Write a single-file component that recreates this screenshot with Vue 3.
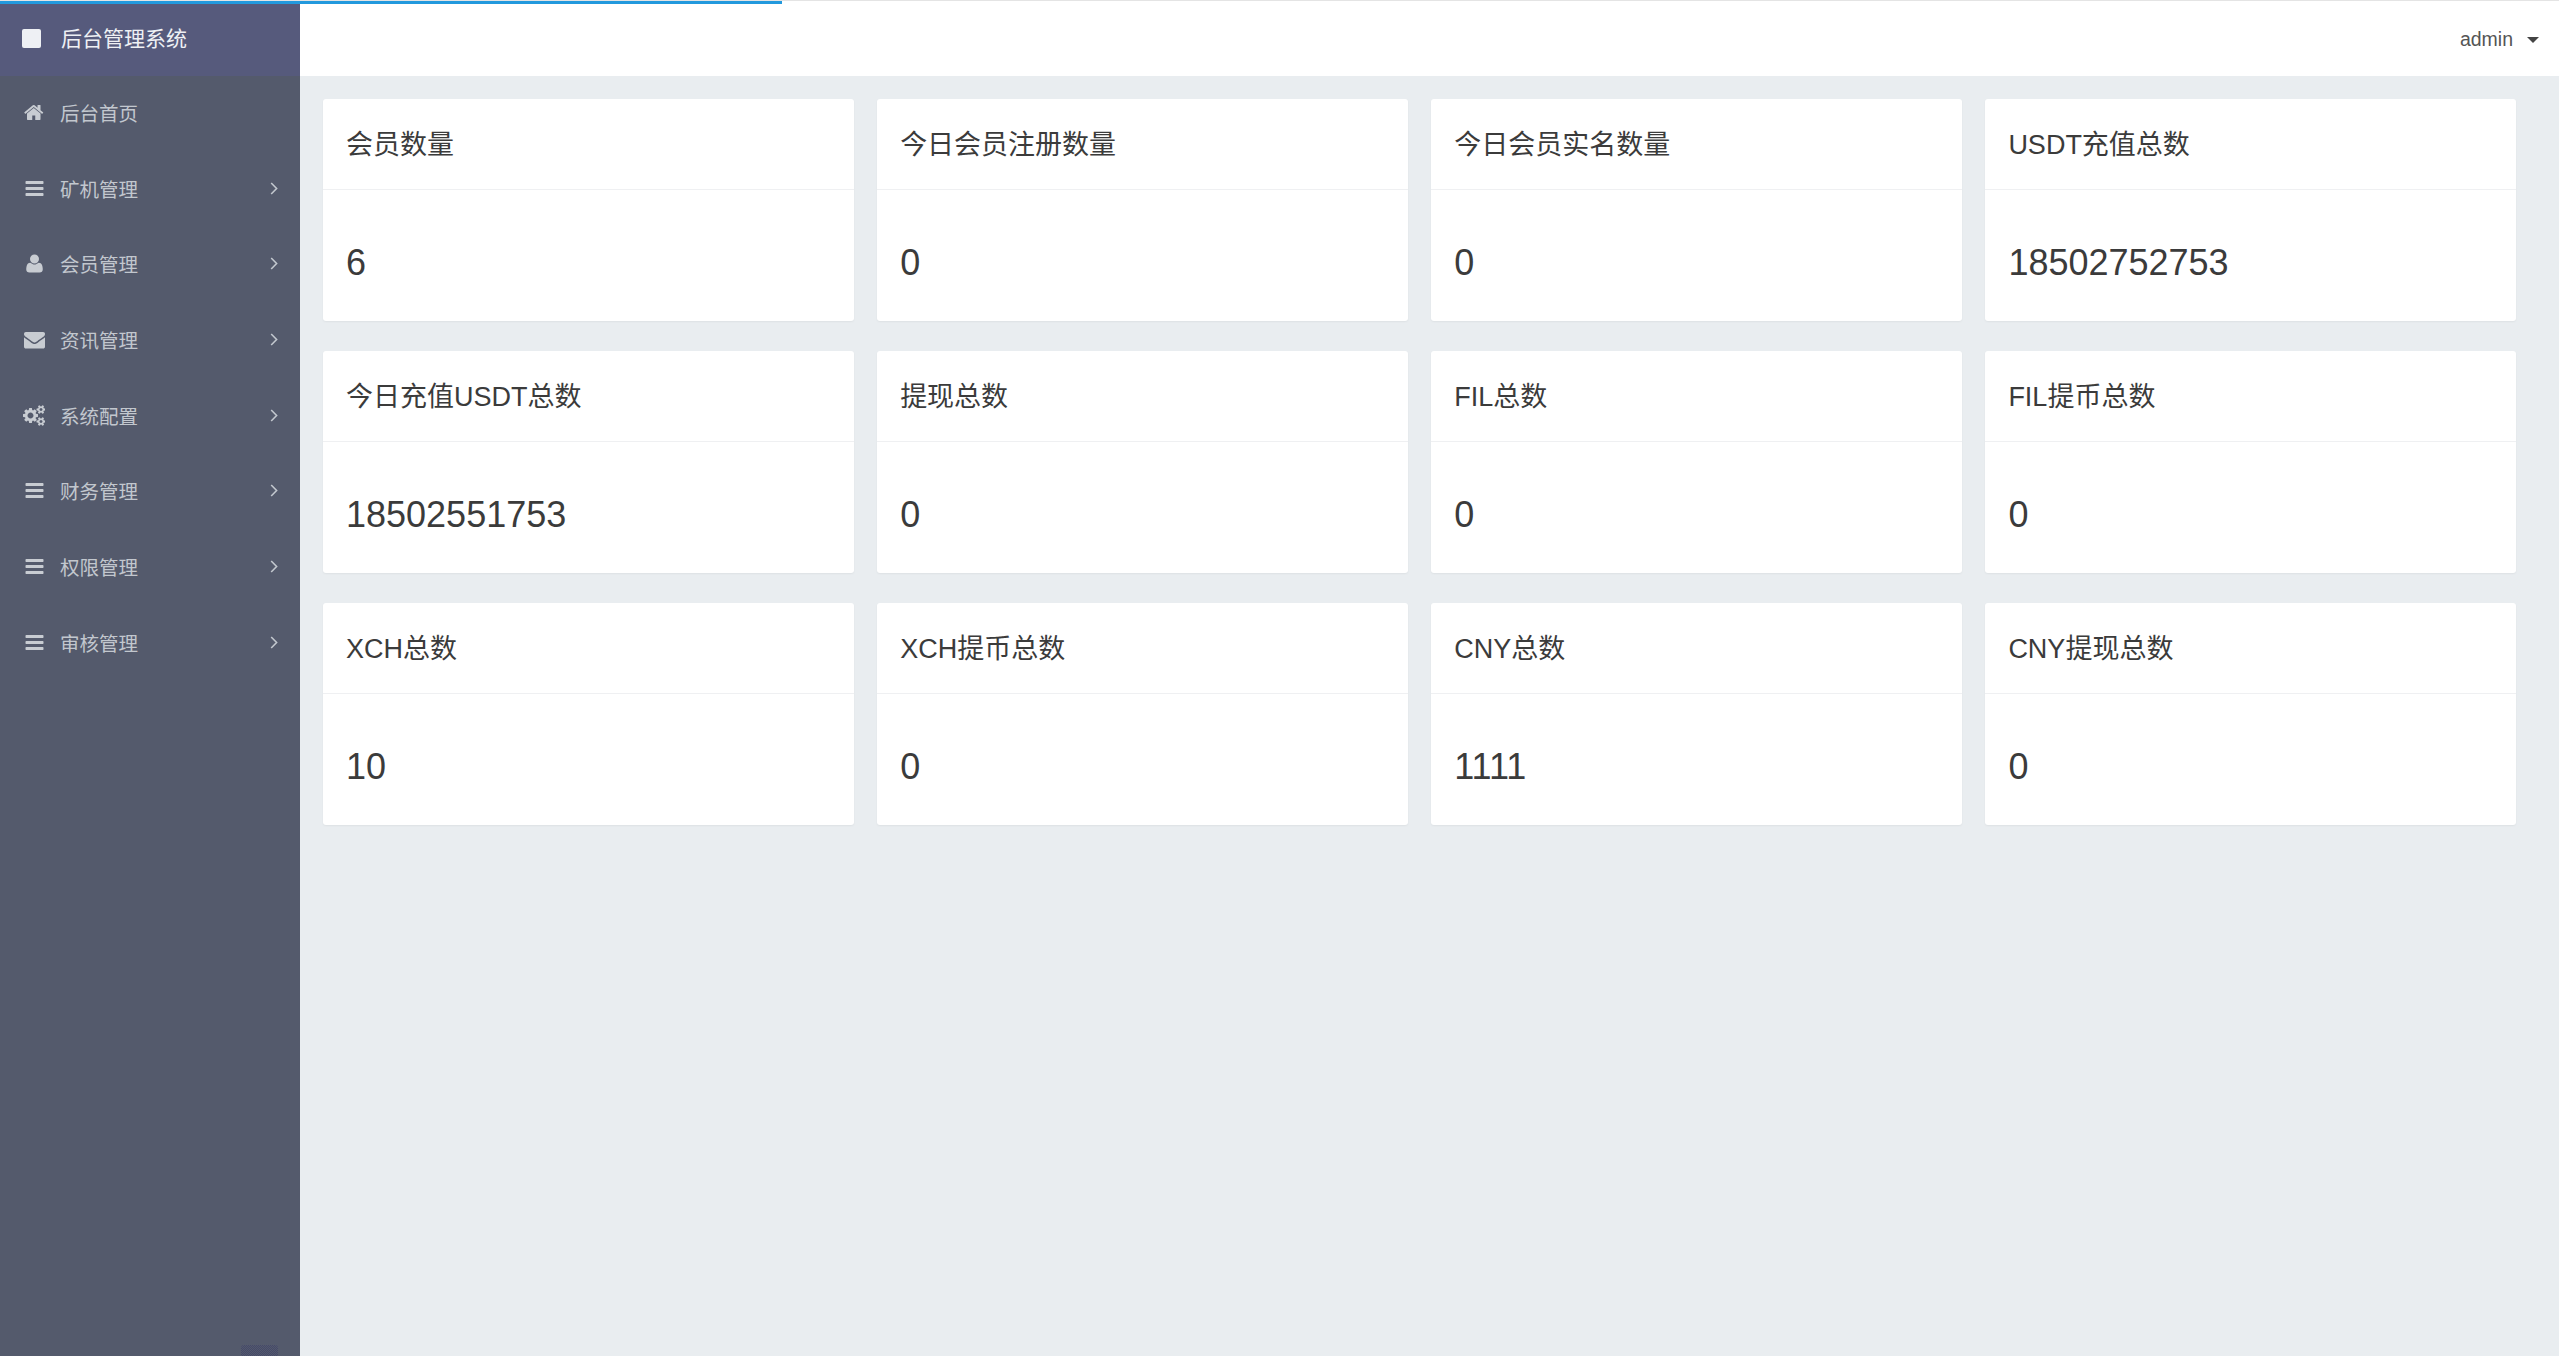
<script setup>
const ICONS = {
  bars: { w: 1792, d: 'M1664 1344v128q0 26-19 45t-45 19H192q-26 0-45-19t-19-45v-128q0-26 19-45t45-19h1408q26 0 45 19t19 45zm0-512v128q0 26-19 45t-45 19H192q-26 0-45-19t-19-45V832q0-26 19-45t45-19h1408q26 0 45 19t19 45zm0-512v128q0 26-19 45t-45 19H192q-26 0-45-19t-19-45V320q0-26 19-45t45-19h1408q26 0 45 19t19 45z' },
  home: { w: 1664, d: 'M1408 992v480q0 26-19 45t-45 19H960v-384H704v384H320q-26 0-45-19t-19-45V992q0-1 .5-3t.5-3l575-474 575 474q1 2 1 6zm223-69l-62 74q-8 9-21 11h-3q-13 0-21-7L832 424 140 1001q-12 8-24 7-13-2-21-11l-62-74q-8-10-7-23.5T37 878l719-599q32-26 76-26t76 26l244 204V288q0-14 9-23t23-9h192q14 0 23 9t9 23v408l219 182q10 8 11 21.5t-7 23.5z' },
  user: { w: 1792, d: 'M1600 1405q0 120-73 189.5t-194 69.5H459q-121 0-194-69.5T192 1405q0-53 3.5-103.5t14-109T236 1084t43-97.5 62-81 85.5-53.5T538 832q9 0 42 21.5t74.5 48 108 48T896 971t133.5-21.5 108-48 74.5-48 42-21.5q61 0 111.5 20t85.5 53.5 62 81 43 97.5 26.5 108.5 14 109 3.5 103.5zm-320-893q0 159-112.5 271.5T896 896 624.5 783.5 512 512t112.5-271.5T896 128t271.5 112.5T1280 512z' },
  envelope: { w: 1792, d: 'M1792 710v794q0 66-47 113t-113 47H160q-66 0-113-47T0 1504V710q44 49 101 87 362 246 497 345 57 42 92.5 65.5t94.5 48 110 24.5h2q51 0 110-24.5t94.5-48 92.5-65.5q170-123 498-345 57-39 100-87zm0-294q0 79-49 151t-122 123q-376 261-468 325-10 7-42.5 30.5t-54 38-52 32.5-57.5 27-50 9h-2q-23 0-50-9t-57.5-27-52-32.5-54-38T639 1015q-91-64-262-182.5T172 690q-62-42-117-115.5T0 438q0-78 41.5-130T160 256h1472q65 0 112.5 47t47.5 113z' },
  cogs: { w: 1920, d: 'M896 896q0-106-75-181t-181-75-181 75-75 181 75 181 181 75 181-75 75-181zm768 512q0-52-38-90t-90-38-90 38-38 90q0 53 37.5 90.5t90.5 37.5 90.5-37.5 37.5-90.5zm0-1024q0-52-38-90t-90-38-90 38-38 90q0 53 37.5 90.5T1536 512t90.5-37.5T1664 384zm-384 421v185q0 10-7 19.5t-16 10.5l-155 24q-11 35-32 76 34 48 90 115 7 11 7 20 0 12-7 19-23 30-82.5 89.5T999 1423q-11 0-21-7l-115-90q-37 19-77 31-11 108-23 155-7 24-30 24H547q-11 0-20-7.5t-10-17.5l-23-153q-34-10-75-31l-118 89q-7 7-20 7-11 0-21-8-144-133-144-160 0-9 7-19 10-14 41-53t47-61q-23-44-35-82l-152-24q-10-1-17-9.5T0 987V802q0-10 7-19.5T23 772l155-24q11-35 32-76-34-48-90-115-7-11-7-20 0-12 7-20 22-30 82-89t79-59q11 0 21 7l115 90q34-18 77-32 11-108 23-154 7-24 30-24h186q11 0 20 7.5t10 17.5l23 153q34 10 75 31l118-89q8-7 20-7 11 0 21 8 144 133 144 160 0 8-7 19-12 16-42 54t-45 60q23 48 34 82l152 23q10 2 17 10.5t7 19.5zm640 533v140q0 16-149 31-12 27-30 52 51 113 51 138 0 4-4 7-122 71-124 71-8 0-46-47t-52-68q-20 2-30 2t-30-2q-14 21-52 68t-46 47q-2 0-124-71-4-3-4-7 0-25 51-138-18-25-30-52-149-15-149-31v-140q0-16 149-31 13-29 30-52-51-113-51-138 0-4 4-7 4-2 35-20t59-34 30-16q8 0 46 46.5t52 67.5q20-2 30-2t30 2q51-71 92-112l6-2q4 0 124 70 4 3 4 7 0 25-51 138 17 23 30 52 149 15 149 31zm0-1024v140q0 16-149 31-12 27-30 52 51 113 51 138 0 4-4 7-122 71-124 71-8 0-46-47t-52-68q-20 2-30 2t-30-2q-14 21-52 68t-46 47q-2 0-124-71-4-3-4-7 0-25 51-138-18-25-30-52-149-15-149-31V314q0-16 149-31 13-29 30-52-51-113-51-138 0-4 4-7 4-2 35-20t59-34 30-16q8 0 46 46.5t52 67.5q20-2 30-2t30 2q51-71 92-112l6-2q4 0 124 70 4 3 4 7 0 25-51 138 17 23 30 52 149 15 149 31z' },
}

const menu = [
  { label: '后台首页', icon: 'home', arrow: false },
  { label: '矿机管理', icon: 'bars', arrow: true },
  { label: '会员管理', icon: 'user', arrow: true },
  { label: '资讯管理', icon: 'envelope', arrow: true },
  { label: '系统配置', icon: 'cogs', arrow: true },
  { label: '财务管理', icon: 'bars', arrow: true },
  { label: '权限管理', icon: 'bars', arrow: true },
  { label: '审核管理', icon: 'bars', arrow: true },
]

const cards = [
  { title: '会员数量', value: '6' },
  { title: '今日会员注册数量', value: '0' },
  { title: '今日会员实名数量', value: '0' },
  { title: 'USDT充值总数', value: '18502752753' },
  { title: '今日充值USDT总数', value: '18502551753' },
  { title: '提现总数', value: '0' },
  { title: 'FIL总数', value: '0' },
  { title: 'FIL提币总数', value: '0' },
  { title: 'XCH总数', value: '10' },
  { title: 'XCH提币总数', value: '0' },
  { title: 'CNY总数', value: '1111' },
  { title: 'CNY提现总数', value: '0' },
]
</script>

<template>
  <div class="app">
    <div class="progress"><div class="progress-fill"></div></div>

    <aside class="sidebar">
      <div class="brand">
        <span class="brand-mark"></span>
        <span class="brand-text">后台管理系统</span>
      </div>
      <nav class="menu">
        <a v-for="item in menu" :key="item.label" class="menu-item">
          <span class="menu-icon">
            <svg :viewBox="`0 0 ${ICONS[item.icon].w} 1792`" :width="(ICONS[item.icon].w / 1792) * 21" height="21">
              <path :d="ICONS[item.icon].d" fill="currentColor" />
            </svg>
          </span>
          <span class="menu-label">{{ item.label }}</span>
          <svg v-if="item.arrow" class="menu-arrow" viewBox="0 0 8 13" width="8" height="13">
            <path d="M1.2 1 L6.6 6.5 L1.2 12" fill="none" stroke="currentColor" stroke-width="1.6" />
          </svg>
        </a>
      </nav>
      <div class="sidebar-handle"></div>
    </aside>

    <div class="content">
      <header class="topbar">
        <span class="user">admin</span>
        <span class="caret"></span>
      </header>
      <main class="grid">
        <section v-for="card in cards" :key="card.title" class="card">
          <div class="card-title">{{ card.title }}</div>
          <div class="card-body">{{ card.value }}</div>
        </section>
      </main>
    </div>
  </div>
</template>

<style scoped>
.app {
  position: relative;
  display: flex;
  height: 1356px;
  overflow: hidden;
  font-family: "Liberation Sans", "Noto Sans CJK SC", sans-serif;
  background: #e9edf0;
}

.progress {
  position: absolute;
  top: 0;
  left: 0;
  right: 0;
  height: 1px;
  background: #e4e4e4;
  z-index: 5;
}

.progress-fill {
  position: absolute;
  top: 1px;
  left: 0;
  width: 782px;
  height: 3px;
  background: #2299dd;
}

.sidebar {
  position: relative;
  flex: 0 0 300px;
  background: #545a6c;
  color: #c2c7ce;
}

.brand {
  display: flex;
  align-items: center;
  height: 76px;
  padding-left: 22px;
  background: #565a7c;
  color: #eef0f4;
  font-size: 21px;
}

.brand-mark {
  flex: 0 0 19px;
  height: 19px;
  margin-right: 20px;
  border-radius: 2px;
  background: #eef0f4;
}

.brand-text {
  margin-bottom: 3px;
}

.menu {
  margin-top: -1.5px;
}

.menu-item {
  display: flex;
  align-items: center;
  height: 75.7px;
  padding: 0 22px 0 21px;
  font-size: 19.5px;
}

.menu-icon {
  display: flex;
  justify-content: center;
  flex: 0 0 26px;
  margin-right: 13px;
  color: #c8ccd2;
}

.menu-arrow {
  margin-left: auto;
  color: #c2c7ce;
}

.sidebar-handle {
  position: absolute;
  left: 241px;
  bottom: 0;
  width: 37px;
  height: 11px;
  border-radius: 3px 3px 0 0;
  background: repeating-conic-gradient(#45496a 0 25%, #545a6c 0 50%) 0 0 / 2px 2px;
}

.content {
  flex: 1;
  min-width: 0;
}

.topbar {
  display: flex;
  align-items: center;
  justify-content: flex-end;
  box-sizing: border-box;
  height: 76px;
  padding: 3px 20px 0 0;
  background: #fff;
  color: #555;
  font-size: 19.5px;
}

.caret {
  width: 0;
  height: 0;
  margin-left: 14px;
  border-top: 6px solid #444;
  border-left: 6px solid transparent;
  border-right: 6px solid transparent;
}

.grid {
  display: grid;
  grid-template-columns: repeat(4, 1fr);
  gap: 30px 23.5px;
  padding: 23px 43px 0 23px;
}

.card {
  height: 222px;
  border-radius: 3px;
  background: #fff;
  box-shadow: 0 1px 2px rgba(0, 0, 0, 0.05);
}

.card-title {
  display: flex;
  align-items: center;
  box-sizing: border-box;
  height: 91px;
  padding: 0 23px 3px;
  border-bottom: 1px solid #eff0f2;
  color: #3b3b3b;
  font-size: 27px;
}

.card-body {
  padding: 48px 23px 0;
  color: #3b3b3b;
  font-size: 36px;
  line-height: 50px;
}
</style>

<style>
html, body {
  margin: 0;
  background: #e9edf0;
}
</style>
